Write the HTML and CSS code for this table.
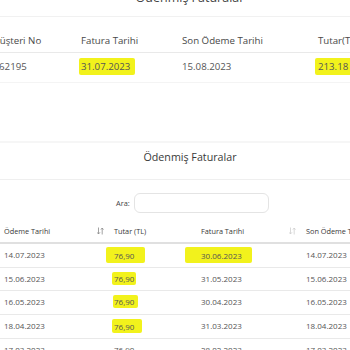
FILE: index.html
```html
<!DOCTYPE html>
<html lang="tr">
<head>
<meta charset="utf-8">
<title>Ödenmiş Faturalar</title>
<link rel="stylesheet" href="styles.css">
</head>
<body>
<div class="page">
  <div class="top-title"><h2>Ödenmiş Faturalar</h2></div>
  <div class="t1">
    <div class="t1-row t1-head">
      <div>Müşteri No</div><div>Fatura Tarihi</div><div>Son Ödeme Tarihi</div><div>Tutar(TL)</div>
    </div>
    <div class="t1-row t1-data">
      <div class="cust">3762195</div><div><span class="hl hl1">31.07.2023</span></div><div>15.08.2023</div><div><span class="hl hl2">213.18</span></div>
    </div>
  </div>
  <div class="gap"></div>
  <section class="paid">
    <h3 class="paid-title">Ödenmiş Faturalar</h3>
    <div class="search"><label>Ara:</label><input type="text"></div>
    <div class="t2">
      <div class="t2-row t2-head">
        <div class="th">Ödeme Tarihi<svg class="sort dark" viewBox="0 0 7 8" width="7" height="8"><path d="M1.5 0.5V7M0 5.3L1.5 7L3 5.3M5.2 7.5V1M3.9 2.6L5.2 1L6.5 2.6" fill="none" stroke="currentColor" stroke-width="0.8"/></svg></div>
        <div class="th">Tutar (TL)</div>
        <div class="th">Fatura Tarihi<svg class="sort light" viewBox="0 0 7 8" width="7" height="8"><path d="M1.5 0.5V7M0 5.3L1.5 7L3 5.3M5.2 7.5V1M3.9 2.6L5.2 1L6.5 2.6" fill="none" stroke="currentColor" stroke-width="0.8"/></svg></div>
        <div class="th">Son Ödeme Tarihi</div>
      </div>
      <div class="t2-row">
        <div>14.07.2023</div><div><span class="hl hl3">76,90</span></div><div><span class="hl hl4">30.06.2023</span></div><div>14.07.2023</div>
      </div>
      <div class="t2-row">
        <div>15.06.2023</div><div><span class="hl hl5">76,90</span></div><div>31.05.2023</div><div>15.06.2023</div>
      </div>
      <div class="t2-row">
        <div>16.05.2023</div><div><span class="hl hl6">76,90</span></div><div>30.04.2023</div><div>16.05.2023</div>
      </div>
      <div class="t2-row">
        <div>18.04.2023</div><div><span class="hl hl7">76,90</span></div><div>31.03.2023</div><div>18.04.2023</div>
      </div>
      <div class="t2-row">
        <div>17.03.2023</div><div>76,90</div><div>28.02.2023</div><div>17.03.2023</div>
      </div>
    </div>
  </section>
</div>
</body>
</html>
```

FILE: styles.css
```css
html, body {
  margin: 0;
  padding: 0;
  background: #ffffff;
}
body {
  font-family: "Open Sans", "Noto Sans", sans-serif;
}
.page {
  width: 350px;
  height: 350px;
  overflow: hidden;
}
.top-title {
  height: 16px;
  overflow: hidden;
  border-bottom: 1px solid #f1f1f1;
  padding-left: 30px;
}
.top-title h2 {
  margin: -10px 0 0 0;
  font-size: 12.5px;
  line-height: 16px;
  font-weight: 400;
  color: #444;
  text-align: center;
  white-space: nowrap;
}
.t1-row {
  display: grid;
  grid-template-columns: 90px 101px 136px 100px;
  margin-left: -9px;
  white-space: nowrap;
  line-height: 14px;
}
.t1-head {
  padding: 17px 0 4px 0;
  border-bottom: 1px solid #e9e9e9;
  font-size: 9.7px;
  color: #484848;
}
.t1-data {
  padding: 7px 0 8px 0;
  border-bottom: 1px solid #f4f4f4;
  font-size: 9.7px;
  color: #555;
}
.t1-data .cust {
  margin-left: -3px;
}
.hl {
  background: #f2f21c;
  border-radius: 2px;
}
.hl1 { padding: 2px 5px 2px 2px; margin: 0 -5px 0 -2px; }
.hl2 { padding: 2px 12px 2px 3px; margin: 0 -12px 0 -3px; }
.gap {
  height: 58px;
  border-bottom: 2px solid #f6f6f6;
}
.paid-title {
  margin: 0;
  padding: 6px 0 14px 30px;
  font-size: 10.7px;
  line-height: 16px;
  font-weight: 400;
  color: #3a3a3a;
  text-align: center;
  border-bottom: 1px solid #efefef;
}
.search {
  display: flex;
  align-items: center;
  gap: 4px;
  padding: 13px 0 0 116px;
  font-size: 7.4px;
  color: #444;
}
.search input {
  box-sizing: border-box;
  width: 135px;
  height: 20px;
  margin: 0;
  border: 1px solid #e4e4e4;
  border-radius: 6px;
  background: #fff;
  outline: none;
}
.t2-row {
  display: grid;
  grid-template-columns: 110px 86px 106px 100px;
  white-space: nowrap;
  font-size: 8px;
  line-height: 12.67px;
  color: #555;
  border-bottom: 1px solid #e9e9e9;
}
.t2-row > div {
  padding: 5px 0 5px 4px;
}
.t2-row > div:nth-child(3) {
  padding-left: 5px;
}
.t2-head {
  border-bottom: 2px solid #e0e0e0;
  font-size: 7.3px;
  line-height: 12px;
  color: #383838;
}
.t2-head > .th {
  display: flex;
  align-items: center;
  justify-content: space-between;
  padding: 12px 6px 5px 4px;
}
.t2-head > .th:nth-child(3) {
  padding-left: 5px;
}
.sort.dark { color: #8a8a8a; }
.sort.light { color: #cfcfcf; }
.hl3 { padding: 2.5px 11px 2.5px 8px; margin: 0 -11px 0 -8px; }
.hl4 { padding: 2.5px 10px 2.5px 16px; margin: 0 -10px 0 -16px; }
.hl5 { padding: 1px 2px 1px 2px; margin: 0 -2px 0 -2px; }
.hl6 { padding: 1px 4px 1px 1px; margin: 0 -4px 0 -1px; }
.hl7 { padding: 1.5px 8px 1.5px 2px; margin: 0 -8px 0 -2px; }
```
